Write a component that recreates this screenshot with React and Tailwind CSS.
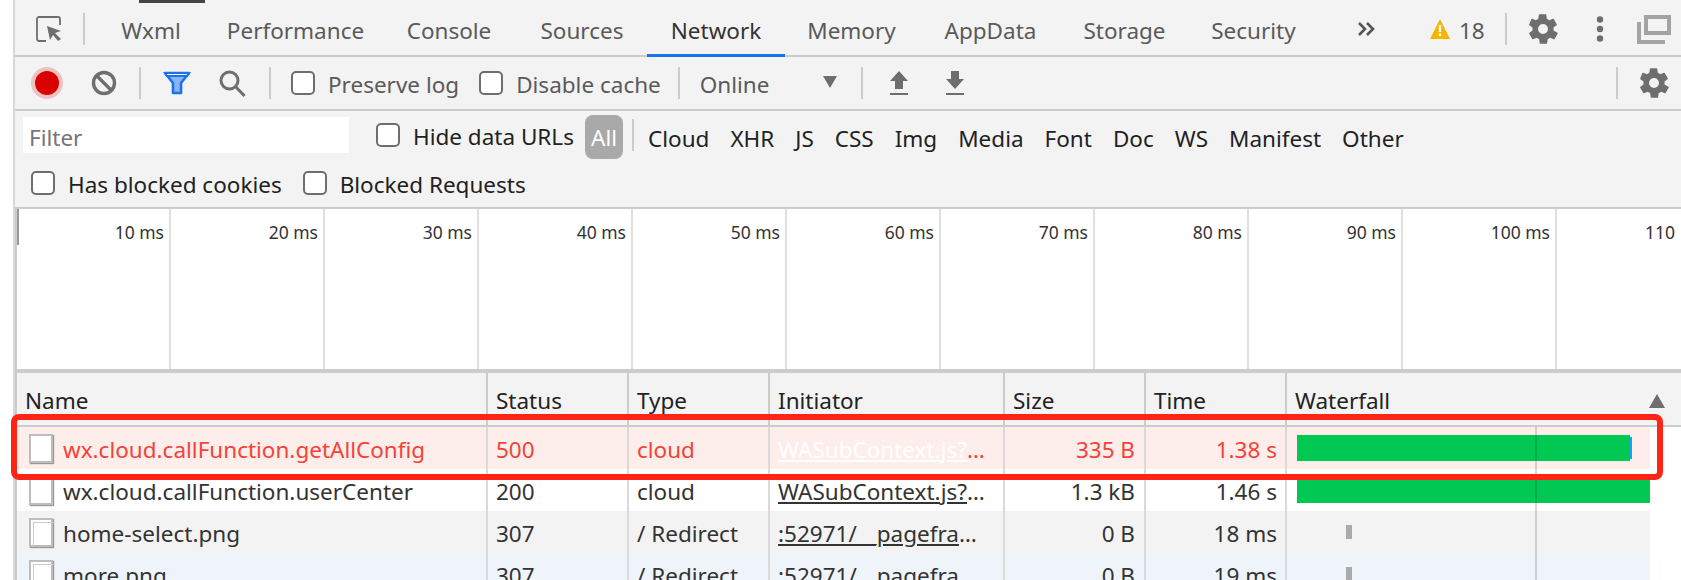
import React from 'react';

const font = 'font-["Segoe_UI","Noto_Sans",sans-serif]';

const tabs = [
  { label: 'Wxml', w: 'w-[118px]' },
  { label: 'Performance', w: 'w-[171px]' },
  { label: 'Console', w: 'w-[136px]' },
  { label: 'Sources', w: 'w-[130px]' },
  { label: 'Network', w: 'w-[138px]', active: true },
  { label: 'Memory', w: 'w-[133px]' },
  { label: 'AppData', w: 'w-[145px]' },
  { label: 'Storage', w: 'w-[123px]' },
  { label: 'Security', w: 'w-[135px]' },
];

const filters = ['Cloud', 'XHR', 'JS', 'CSS', 'Img', 'Media', 'Font', 'Doc', 'WS', 'Manifest', 'Other'];
const ticks = ['10 ms', '20 ms', '30 ms', '40 ms', '50 ms', '60 ms', '70 ms', '80 ms', '90 ms', '100 ms'];

const columns = [
  { label: 'Name', w: 'w-[471px]' },
  { label: 'Status', w: 'w-[141px]' },
  { label: 'Type', w: 'w-[141px]' },
  { label: 'Initiator', w: 'w-[235px]' },
  { label: 'Size', w: 'w-[141px]' },
  { label: 'Time', w: 'w-[141px]' },
];

const rows = [
  { name: 'wx.cloud.callFunction.getAllConfig', status: '500', type: 'cloud', init: 'WASubContext.js?', size: '335 B', time: '1.38 s', bg: 'bg-[#fdeeec]', error: true },
  { name: 'wx.cloud.callFunction.userCenter', status: '200', type: 'cloud', init: 'WASubContext.js?', size: '1.3 kB', time: '1.46 s', bg: 'bg-white' },
  { name: 'home-select.png', status: '307', type: '/ Redirect', init: ':52971/__pagefra', size: '0 B', time: '18 ms', bg: 'bg-[#f3f3f3]', stacked: true },
  { name: 'more.png', status: '307', type: '/ Redirect', init: ':52971/__pagefra', size: '0 B', time: '19 ms', bg: 'bg-[#eff4fb]', stacked: true },
];

const Gear = ({ className }) => (
  <svg viewBox="0 0 24 24" className={className} fill="#6e6e6e">
    <path d="M19.4 13a7.6 7.6 0 0 0 0-2l2.2-1.7a.5.5 0 0 0 .1-.7l-2.1-3.6a.5.5 0 0 0-.6-.2l-2.6 1a7.6 7.6 0 0 0-1.7-1l-.4-2.8a.5.5 0 0 0-.5-.4H9.6a.5.5 0 0 0-.5.4l-.4 2.8a7.6 7.6 0 0 0-1.7 1l-2.6-1a.5.5 0 0 0-.6.2L2.3 8.6a.5.5 0 0 0 .1.7L4.6 11a7.6 7.6 0 0 0 0 2l-2.2 1.7a.5.5 0 0 0-.1.7l2.1 3.6c.1.2.4.3.6.2l2.6-1a7.6 7.6 0 0 0 1.7 1l.4 2.8c0 .2.2.4.5.4h4.2c.3 0 .5-.2.5-.4l.4-2.8a7.6 7.6 0 0 0 1.7-1l2.6 1c.2.1.5 0 .6-.2l2.1-3.6a.5.5 0 0 0-.1-.7zM12 15.5a3.5 3.5 0 1 1 0-7 3.5 3.5 0 0 1 0 7z" />
  </svg>
);

const Check = ({ label, muted }) => (
  <label className="flex items-center gap-[13px] whitespace-nowrap">
    <span className="w-[24px] h-[24px] rounded-[5px] border-2 border-[#6e6e6e] bg-white shrink-0" />
    <span className={`pt-[4px] ${muted ? 'text-[#5a5a5a]' : 'text-[#222]'}`}>{label}</span>
  </label>
);

const Divider = ({ className = '' }) => <div className={`w-[2px] h-[32px] bg-[#ccc] shrink-0 ${className}`} />;

const FileIcon = ({ stacked }) => (
  <div className="relative w-[24px] h-[29px] shrink-0 bg-white border-2 border-[#bdbdbd] shadow-[1px_1px_1px_#999]">
    {stacked && <div className="absolute left-[2px] top-[2px] w-[22px] h-[25px] border-l border-t border-[#ccc]" />}
  </div>
);

export default function App() {
  return (
    <div className={`${font} w-[1681px] h-[580px] overflow-hidden bg-white flex text-[22.5px] text-[#222]`}>
      <div className="w-[13px] shrink-0 bg-white" />
      <div className="w-[2px] shrink-0 bg-[#d8d8d8]" />
      <div className="flex-1 min-w-0 flex flex-col">
        {/* Tab bar */}
        <div className="h-[57px] shrink-0 flex items-center pt-[3px] bg-[#f3f3f3] border-b-2 border-[#ccc] relative">
          <div className="absolute left-[124px] top-0 w-[66px] h-[3px] bg-[#444]" />
          <div className="w-[68px] h-full flex items-center justify-center shrink-0">
            <svg viewBox="0 0 26 26" className="w-[26px] h-[26px]" fill="none">
              <path d="M10 25H3a2 2 0 0 1-2-2V3a2 2 0 0 1 2-2h19a2 2 0 0 1 2 2v6" stroke="#6e6e6e" strokeWidth="1.8" />
              <path d="M11 10l14 5-6 2 6 6-3 2-5-6-3 5z" fill="#6e6e6e" />
            </svg>
          </div>
          <Divider />
          <div className="flex h-full ml-[7px]">
            {tabs.map((t) => (
              <div key={t.label} className={`${t.w} h-full pt-[3px] flex items-center justify-center relative ${t.active ? 'text-[#333]' : 'text-[#5a5a5a]'}`}>
                {t.label}
                {t.active && <div className="absolute left-0 right-0 bottom-[-2px] h-[3px] bg-[#1a73e8]" />}
              </div>
            ))}
          </div>
          <svg viewBox="0 0 18 14" className="w-[18px] h-[14px] ml-[36px] shrink-0" fill="none" stroke="#555" strokeWidth="2.6">
            <path d="M2 1l6 6-6 6M10 1l6 6-6 6" />
          </svg>
          <svg viewBox="0 0 20 20" className="w-[20px] h-[20px] ml-[55px] shrink-0">
            <path d="M10 0l10 20H0z" fill="#f4b400" />
            <path d="M8.8 6h2.4v7H8.8zM8.8 14.5h2.4V17H8.8z" fill="#fff" />
          </svg>
          <span className="ml-[9px] w-[24px] pt-[3px] text-[#5a5a5a]">18</span>
          <Divider className="ml-[22px]" />
          <Gear className="w-[34px] h-[34px] ml-[19px] shrink-0" />
          <svg viewBox="0 0 8 26" className="w-[8px] h-[26px] ml-[36px] shrink-0" fill="#6e6e6e">
            <circle cx="4" cy="3.5" r="3.2" /><circle cx="4" cy="13" r="3.2" /><circle cx="4" cy="22.5" r="3.2" />
          </svg>
          <svg viewBox="0 0 34 29" className="w-[34px] h-[29px] ml-[33px] shrink-0" fill="none" stroke="#a3a3a3" strokeWidth="4">
            <path d="M2 7v20h26" />
            <path d="M9 2h23v16H9z" />
          </svg>
        </div>

        {/* Network toolbar */}
        <div className="h-[54px] shrink-0 flex items-center bg-[#f3f3f3] border-b-2 border-[#ccc] text-[#5a5a5a]">
          <div className="w-[24px] h-[24px] ml-[20px] rounded-full bg-[#d90000] shadow-[0_0_0_4px_rgba(217,0,0,0.2)] shrink-0" />
          <svg viewBox="0 0 26 26" className="w-[26px] h-[26px] ml-[32px] shrink-0" fill="none" stroke="#6e6e6e" strokeWidth="3.4">
            <circle cx="13" cy="13" r="10.5" />
            <path d="M5.5 5.5l15 15" />
          </svg>
          <Divider className="ml-[22px]" />
          <svg viewBox="0 0 28 24" className="w-[28px] h-[24px] ml-[22px] shrink-0">
            <path d="M2 2h24l-8 10v10h-8V12z" fill="#8ab4f0" stroke="#1a73e8" strokeWidth="2.6" strokeLinejoin="round" />
            <path d="M2 2h24l-2 3H4z" fill="#f3f3f3" stroke="#1a73e8" strokeWidth="2" />
          </svg>
          <svg viewBox="0 0 27 27" className="w-[27px] h-[27px] ml-[28px] shrink-0" fill="none" stroke="#6e6e6e" strokeWidth="3">
            <circle cx="10.5" cy="10.5" r="8.5" />
            <path d="M16.5 16.5l9 9.5" />
          </svg>
          <Divider className="ml-[23px]" />
          <div className="flex items-center ml-[20px] gap-[20px]">
            <Check label="Preserve log" muted />
            <Check label="Disable cache" muted />
          </div>
          <Divider className="ml-[17px]" />
          <span className="ml-[20px] w-[123px] pt-[4px]">Online</span>
          <svg viewBox="0 0 14 12" className="w-[14px] h-[12px] shrink-0 mb-[3px]"><path d="M0 0h14L7 12z" fill="#6e6e6e" /></svg>
          <Divider className="ml-[24px]" />
          <svg viewBox="0 0 20 24" className="w-[20px] h-[24px] ml-[26px] shrink-0" fill="#6e6e6e">
            <path d="M10 0l9 10h-5v8H6v-8H1zM1 22h18v2H1z" />
          </svg>
          <svg viewBox="0 0 20 24" className="w-[20px] h-[24px] ml-[36px] shrink-0" fill="#6e6e6e">
            <path d="M6 0h8v8h5l-9 10L1 8h5zM1 22h18v2H1z" />
          </svg>
          <div className="flex-1" />
          <Divider />
          <Gear className="w-[34px] h-[34px] ml-[19px] mr-[10px] shrink-0" />
        </div>

        {/* Filter rows */}
        <div className="h-[98px] shrink-0 bg-[#f3f3f3] border-b-2 border-[#ccc] flex flex-col">
          <div className="flex items-center h-[52px] shrink-0">
            <div className="w-[326px] h-[36px] ml-[8px] mb-[4px] pt-[6px] bg-white flex items-center pl-[6px] text-[#757575] shrink-0">Filter</div>
            <div className="ml-[27px] mb-[4px] w-[197px] shrink-0"><Check label="Hide data URLs" /></div>
            <div className="ml-[12px] w-[38px] h-[44px] pt-[2px] rounded-[8px] bg-[#a9a9a9] text-white flex items-center justify-center shrink-0">All</div>
            <Divider className="ml-[9px] mb-[4px]" />
            <div className="flex items-center ml-[14px] pt-[3px] gap-[21px]">
              {filters.map((f) => <span key={f}>{f}</span>)}
            </div>
          </div>
          <div className="flex items-center gap-[21px] ml-[16px] mt-[1px]">
            <Check label="Has blocked cookies" />
            <Check label="Blocked Requests" />
          </div>
        </div>

        {/* Timeline overview */}
        <div className="h-[164px] shrink-0 bg-white border-b-4 border-l-2 border-[#ccc] flex relative text-[17.5px] text-[#333]">
          <div className="absolute left-0 top-0 w-[2px] h-[36px] bg-[#999]" />
          {ticks.map((t) => (
            <div key={t} className="w-[154px] shrink-0 h-full border-r-2 border-[#e0e0e0] text-right pr-[5px] pt-[10px]">{t}</div>
          ))}
          <div className="pl-[88px] pt-[10px]">110</div>
        </div>

        {/* Request table */}
        <div className="flex-1 relative border-l-2 border-[#ccc]">
          <div className="flex h-[54px] bg-[#f3f3f3] border-b-2 border-[#ccc]">
            {columns.map((c) => (
              <div key={c.label} className={`${c.w} pl-[8px] shrink-0 h-full border-r-2 border-[#ccc] flex items-center pt-[4px]`}>{c.label}</div>
            ))}
            <div className="flex-1 h-full flex items-center justify-between pl-[8px] pr-[16px] pt-[4px]">
              Waterfall
              <svg viewBox="0 0 16 14" className="w-[16px] h-[14px]"><path d="M8 0l8 14H0z" fill="#6e6e6e" /></svg>
            </div>
          </div>
          {rows.map((r) => (
            <div key={r.name} className={`flex h-[42px] w-[1633px] ${r.bg} ${r.error ? 'text-[#f44336]' : 'text-[#333]'}`}>
              <div className="w-[471px] shrink-0 border-r-2 border-[#dadada] flex items-center gap-[10px] pl-[12px] whitespace-nowrap overflow-hidden">
                <FileIcon stacked={r.stacked} />
                <span className="pt-[3px]">{r.name}</span>
              </div>
              <div className="w-[141px] shrink-0 border-r-2 border-[#dadada] flex items-center pl-[8px] pt-[3px]">{r.status}</div>
              <div className="w-[141px] shrink-0 border-r-2 border-[#dadada] flex items-center pl-[8px] pt-[3px]">{r.type}</div>
              <div className="w-[235px] shrink-0 border-r-2 border-[#dadada] flex items-center pl-[8px] pt-[3px] whitespace-nowrap">
                <span className={`underline ${r.error ? 'text-white' : ''}`}>{r.init}</span>…
              </div>
              <div className="w-[141px] shrink-0 border-r-2 border-[#dadada] flex items-center justify-end pr-[9px] pt-[3px]">{r.size}</div>
              <div className="w-[141px] shrink-0 border-r-2 border-[#dadada] flex items-center justify-end pr-[8px] pt-[3px]">{r.time}</div>
              <div className="flex-1 relative">
                {r.status === '500' && <div className="absolute left-[10px] top-[8px] w-[333px] h-[26px] bg-[#00c853]" />}
                {r.status === '500' && <div className="absolute left-[343px] top-[10px] w-[2px] h-[22px] bg-[#1a9fff]" />}
                {r.status === '200' && <div className="absolute left-[10px] top-[8px] w-[353px] h-[26px] bg-[#00c853]" />}
                {r.status === '307' && <div className="absolute left-[59px] top-[14px] w-[6px] h-[14px] bg-[#aaa]" />}
                <div className="absolute left-[248px] top-0 bottom-0 w-[2px] bg-black/15" />
              </div>
            </div>
          ))}
          {/* annotation drawn over the screenshot */}
          <div className="absolute left-[-6px] top-[41px] w-[1652px] h-[66px] border-[6px] border-[#ff2416] rounded-[8px] pointer-events-none" />
        </div>
      </div>
    </div>
  );
}
